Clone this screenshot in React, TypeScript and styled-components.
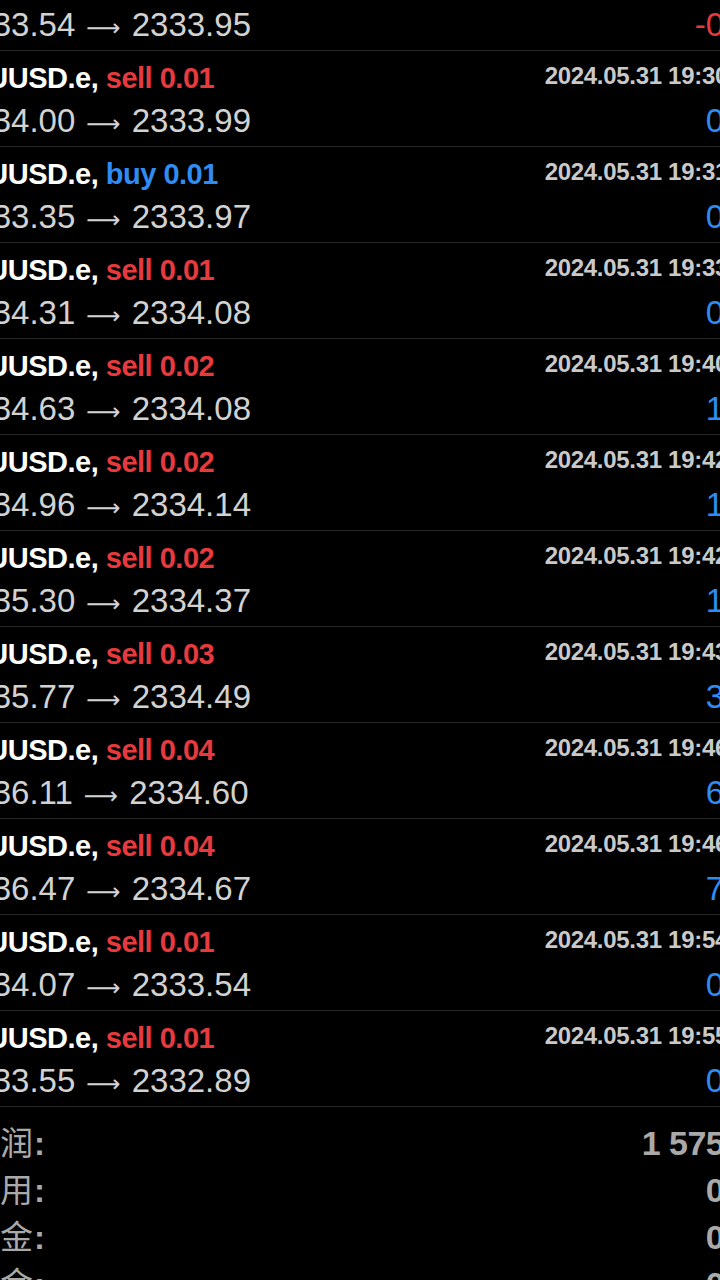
import React from "react";
import styled, { createGlobalStyle } from "styled-components";

const GlobalStyle = createGlobalStyle`
  html, body {
    margin: 0;
    padding: 0;
    background: #000;
    overflow: hidden;
  }
  body {
    font-family: "Liberation Sans", Arial, "Noto Sans CJK SC", sans-serif;
  }
`;

const Screen = styled.div`
  width: 720px;
  height: 1280px;
  overflow: hidden;
  background: #000;
`;

// the history list is wider than the visible crop, so it is shifted left
const Wide = styled.div`
  width: 822px;
  margin-left: -52px;
  margin-top: -45px;
`;

const Row = styled.div`
  display: grid;
  grid-template-columns: 1fr auto;
  grid-template-rows: 40px 46px;
  height: 96px;
  padding-top: 7px;
  box-sizing: border-box;
  border-bottom: 1px solid #262626;
`;

const Deal = styled.div`
  font-size: 29px;
  font-weight: 700;
  line-height: 40px;
  letter-spacing: -0.5px;
  color: #fff;
  white-space: nowrap;
`;

const Side = styled.span<{ $buy?: boolean }>`
  color: ${(p) => (p.$buy ? "#2f8cf2" : "#e63a3f")};
`;

const Time = styled.div`
  align-self: start;
  font-size: 24px;
  font-weight: 700;
  line-height: 36px;
  letter-spacing: -0.3px;
  color: #c9c9c9;
  margin-right: 42px;
  white-space: nowrap;
`;

const Prices = styled.div`
  display: flex;
  align-items: baseline;
  gap: 11px;
  margin-left: 8px;
  font-size: 33px;
  line-height: 46px;
  color: #d2d2d2;
  white-space: nowrap;
`;

const Arrow = styled.span`
  font-family: "DejaVu Sans", sans-serif;
  font-size: 24px;
  color: #d2d2d2;
`;

const Profit = styled.div<{ $neg?: boolean }>`
  font-size: 33px;
  line-height: 46px;
  text-align: right;
  color: ${(p) => (p.$neg ? "#e63a3f" : "#2f8cf2")};
`;

const Summary = styled.div`
  padding-top: 13px;
`;

const SumRow = styled.div`
  display: flex;
  justify-content: space-between;
  align-items: baseline;
  line-height: 47px;
  color: #a9a9a9;
`;

const SumLabel = styled.span`
  padding-left: 19px;
  font-size: 33px;
  font-family: "Liberation Sans", "Noto Sans CJK SC", sans-serif;

  b {
    font-weight: 700;
    margin-left: 1px;
  }
`;

const SumValue = styled.span`
  font-size: 34px;
  font-weight: 700;
  letter-spacing: -0.5px;
`;

type Trade = {
  side: "buy" | "sell";
  lots: string;
  open: string;
  close: string;
  time: string;
  profit: string;
};

const trades: Trade[] = [
  { side: "sell", lots: "0.01", open: "2333.54", close: "2333.95", time: "2024.05.31 19:28", profit: "-0.41" },
  { side: "sell", lots: "0.01", open: "2334.00", close: "2333.99", time: "2024.05.31 19:30", profit: "0.01" },
  { side: "buy", lots: "0.01", open: "2333.35", close: "2333.97", time: "2024.05.31 19:31", profit: "0.62" },
  { side: "sell", lots: "0.01", open: "2334.31", close: "2334.08", time: "2024.05.31 19:33", profit: "0.23" },
  { side: "sell", lots: "0.02", open: "2334.63", close: "2334.08", time: "2024.05.31 19:40", profit: "1.10" },
  { side: "sell", lots: "0.02", open: "2334.96", close: "2334.14", time: "2024.05.31 19:42", profit: "1.64" },
  { side: "sell", lots: "0.02", open: "2335.30", close: "2334.37", time: "2024.05.31 19:42", profit: "1.86" },
  { side: "sell", lots: "0.03", open: "2335.77", close: "2334.49", time: "2024.05.31 19:43", profit: "3.84" },
  { side: "sell", lots: "0.04", open: "2336.11", close: "2334.60", time: "2024.05.31 19:46", profit: "6.04" },
  { side: "sell", lots: "0.04", open: "2336.47", close: "2334.67", time: "2024.05.31 19:46", profit: "7.20" },
  { side: "sell", lots: "0.01", open: "2334.07", close: "2333.54", time: "2024.05.31 19:54", profit: "0.53" },
  { side: "sell", lots: "0.01", open: "2333.55", close: "2332.89", time: "2024.05.31 19:55", profit: "0.66" },
];

const totals = [
  { label: "利润", value: "1 575.62" },
  { label: "信用", value: "0.00" },
  { label: "入金", value: "0.00" },
  { label: "出金", value: "0.00" },
];

export default function App() {
  return (
    <Screen>
      <GlobalStyle />
      <Wide>
        {trades.map((t, i) => (
          <Row key={i}>
            <Deal>
              XAUUSD.e, <Side $buy={t.side === "buy"}>{t.side} {t.lots}</Side>
            </Deal>
            <Time>{t.time}</Time>
            <Prices>
              <span>{t.open}</span>
              <Arrow>⟶</Arrow>
              <span>{t.close}</span>
            </Prices>
            <Profit $neg={t.profit.startsWith("-")}>{t.profit}</Profit>
          </Row>
        ))}
        <Summary>
          {totals.map((s) => (
            <SumRow key={s.label}>
              <SumLabel>
                {s.label}
                <b>:</b>
              </SumLabel>
              <SumValue>{s.value}</SumValue>
            </SumRow>
          ))}
        </Summary>
      </Wide>
    </Screen>
  );
}
